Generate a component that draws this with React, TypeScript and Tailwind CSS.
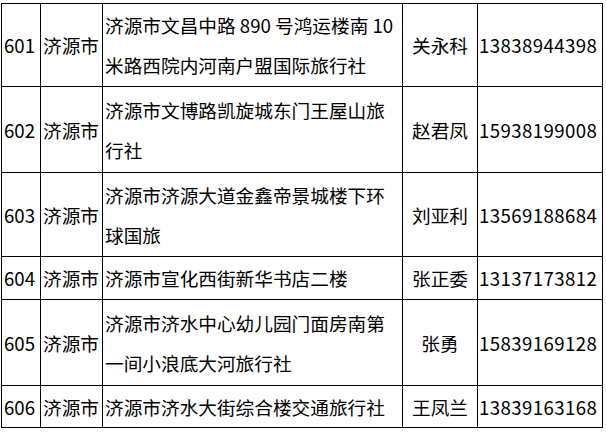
import React from "react";

type Row = { no: string; city: string; addr: string[]; name: string; phone: string; h: string };

const rows: Row[] = [
  { no: "601", city: "济源市", addr: ["济源市文昌中路 890 号鸿运楼南 10", "米路西院内河南户盟国际旅行社"], name: "关永科", phone: "13838944398", h: "h-[83px]" },
  { no: "602", city: "济源市", addr: ["济源市文博路凯旋城东门王屋山旅", "行社"], name: "赵君凤", phone: "15938199008", h: "h-[86px]" },
  { no: "603", city: "济源市", addr: ["济源市济源大道金鑫帝景城楼下环", "球国旅"], name: "刘亚利", phone: "13569188684", h: "h-[84px]" },
  { no: "604", city: "济源市", addr: ["济源市宣化西街新华书店二楼"], name: "张正委", phone: "13137173812", h: "h-[43px]" },
  { no: "605", city: "济源市", addr: ["济源市济水中心幼儿园门面房南第", "一间小浪底大河旅行社"], name: "张勇", phone: "15839169128", h: "h-[86px]" },
  { no: "606", city: "济源市", addr: ["济源市济水大街综合楼交通旅行社"], name: "王凤兰", phone: "13839163168", h: "h-[42px]" },
];

export default function App() {
  return (
    <div className="w-[606px] h-[432px] bg-white overflow-hidden pt-[3px] pl-[1px] text-black [font-family:'Noto_Sans_CJK_SC','Noto_Sans',sans-serif]">
      <table className="border-collapse table-fixed w-[601px] text-[18.67px] leading-[40px]">
        <colgroup>
          <col className="w-[39px]" />
          <col className="w-[62px]" />
          <col className="w-[300px]" />
          <col className="w-[75px]" />
          <col className="w-[125px]" />
        </colgroup>
        <tbody>
          {rows.map((r) => (
            <tr key={r.no} className={r.h}>
              <td className="border border-black p-0 pl-[2px] align-middle whitespace-nowrap">{r.no}</td>
              <td className="border border-black p-0 pl-[2px] align-middle whitespace-nowrap">{r.city}</td>
              <td className="border border-black p-0 pl-[2px] align-middle">
                {r.addr.map((l, i) => (
                  <div key={i} className="whitespace-nowrap">{l}</div>
                ))}
              </td>
              <td className="border border-black p-0 text-center align-middle whitespace-nowrap">{r.name}</td>
              <td className="border border-black p-0 pl-[1px] align-middle whitespace-nowrap tracking-[0.4px]">{r.phone}</td>
            </tr>
          ))}
        </tbody>
      </table>
    </div>
  );
}
